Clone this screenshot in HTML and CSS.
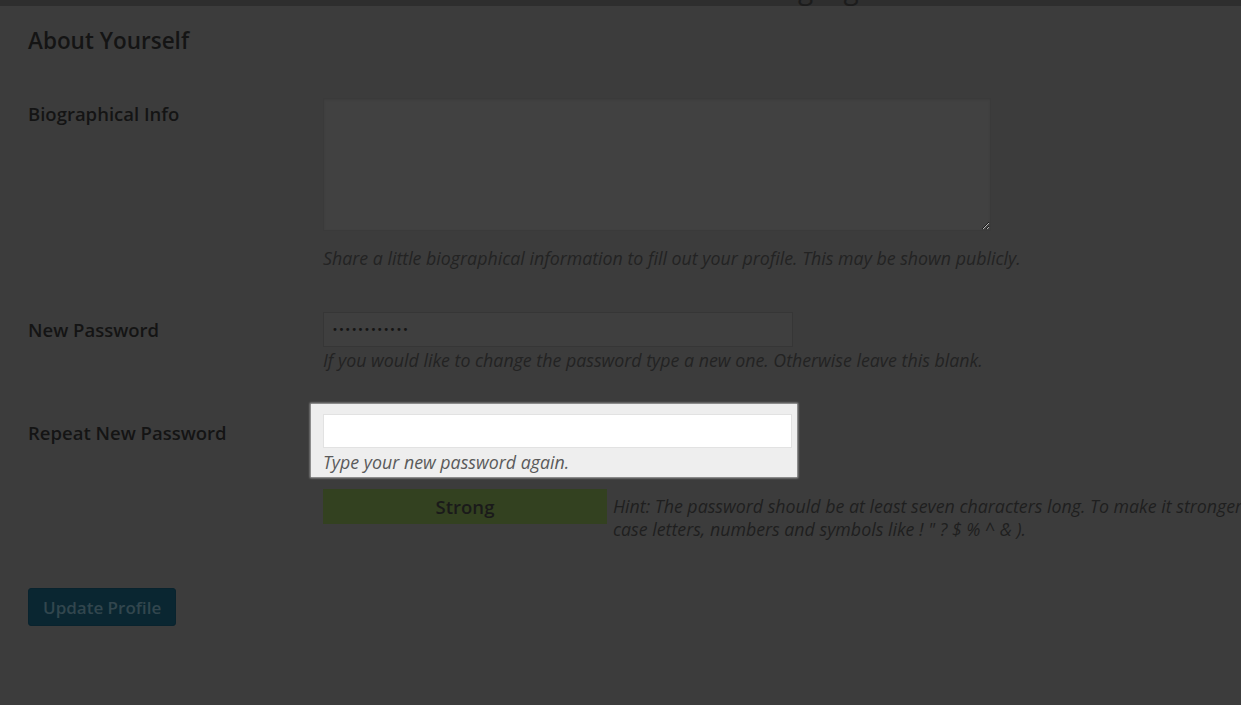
FILE: index.html
```html
<!DOCTYPE html>
<html lang="en">
<head>
    <meta charset="UTF-8">
    <meta name="viewport" content="width=device-width, initial-scale=1.0">
    <title>Profile</title>
    <link rel="stylesheet" href="styles.css">
</head>
<body>

    <!-- cut-off caption strip at the top of the frame -->
    <div class="topbar"><span class="topbar-text">ging</span></div>

    <div class="content">
        <h2>About Yourself</h2>

        <div class="form-row row-bio">
            <label for="description" class="row-label">Biographical Info</label>
            <div class="row-field">
                <textarea id="description" class="bio"></textarea>
                <p class="desc desc-bio">Share a little biographical information to fill out your profile. This may be shown publicly.</p>
            </div>
        </div>

        <div class="form-row row-pass">
            <label for="pass1" class="row-label">New Password</label>
            <div class="row-field">
                <div class="pass-input"><span class="dots">&bull;&bull;&bull;&bull;&bull;&bull;&bull;&bull;&bull;&bull;&bull;&bull;</span></div>
                <p class="desc">If you would like to change the password type a new one. Otherwise leave this blank.</p>
            </div>
        </div>

        <div class="form-row row-repeat">
            <label for="pass2" class="row-label">Repeat New Password</label>
            <div class="row-field">
                <!-- spotlight box -->
                <div class="spotlight">
                    <input type="password" id="pass2" class="repeat-input">
                    <p class="desc desc-light">Type your new password again.</p>
                </div>
                <div class="strength">
                    <div class="strength-bar">Strong</div>
                    <p class="hint">Hint: The password should be at least seven characters long. To make it stronger, use upper and lower case letters, numbers and symbols like ! " ? $ % ^ &amp; ).</p>
                </div>
            </div>
        </div>

        <button class="update">Update Profile</button>
    </div>

</body>
</html>
```

FILE: styles.css
```css
body {
    margin: 0;
    padding: 0;
    background: #3c3c3c;
    font-family: 'Open Sans', 'Noto Sans', sans-serif;
    color: #151515;
    overflow: hidden;
}

.topbar {
    height: 6px;
    background: #2e2e2e;
    overflow: hidden;
    padding-left: 798px;
}

.topbar-text {
    display: block;
    font-size: 28px;
    line-height: 28px;
    margin-top: -26px;
    color: #1c1c1c;
    letter-spacing: 2px;
}

.content {
    padding: 0 0 0 28px;
}

.content h2 {
    font-size: 22.5px;
    font-weight: 600;
    line-height: 28px;
    margin: 21px 0 0 0;
    color: #141414;
}

.form-row {
    display: grid;
    grid-template-columns: 295px 1fr;
}

.row-label {
    font-size: 18.5px;
    font-weight: 600;
    line-height: 24px;
    color: #141414;
}

.row-bio {
    margin-top: 43px;
}

.row-bio .row-label {
    padding-top: 4px;
}

.bio {
    display: block;
    width: 668px;
    height: 133px;
    box-sizing: border-box;
    margin: 0;
    background: #414141;
    border: 1px solid #3a3a3a;
    box-shadow: inset 0 1px 2px rgba(0, 0, 0, 0.08);
    resize: both;
}

.desc {
    margin: 0;
    font-size: 17.8px;
    font-style: italic;
    line-height: 24px;
    color: #232323;
}

.desc-bio {
    margin-top: 15px;
}

.row-pass {
    margin-top: 42px;
}

.row-pass .row-label {
    padding-top: 6px;
}

.pass-input {
    width: 470px;
    height: 35px;
    box-sizing: border-box;
    border: 1px solid #363636;
    background: #3f3f3f;
    padding: 0 0 0 8px;
    display: flex;
    align-items: center;
    margin-bottom: 1px;
}

.dots {
    font-family: 'DejaVu Sans', sans-serif;
    font-size: 10px;
    letter-spacing: 0.5px;
    color: #151515;
}

.row-repeat {
    margin-top: 32px;
}

.row-repeat .row-label {
    padding-top: 17px;
}

.spotlight {
    width: 486px;
    box-sizing: border-box;
    margin-left: -12px;
    padding: 10px 5px 3px 12px;
    background: #eeeeee;
    box-shadow: 0 0 2px 1px rgba(255, 255, 255, 0.6);
}

.repeat-input {
    display: block;
    width: 469px;
    height: 34px;
    box-sizing: border-box;
    margin: 0 0 2px 0;
    border: 1px solid #e2e2e2;
    background: #fff;
    outline: none;
}

.desc-light {
    color: #5a5a5a;
}

.strength {
    display: flex;
    gap: 6px;
    margin-top: 12px;
    width: 1130px;
}

.strength-bar {
    flex: 0 0 284px;
    height: 35px;
    background: #334120;
    font-size: 18.5px;
    font-weight: 600;
    line-height: 35px;
    text-align: center;
    color: #1a1a1a;
}

.hint {
    margin: 6px 0 0 0;
    font-size: 17.8px;
    font-style: italic;
    line-height: 23px;
    color: #1f1f1f;
    width: 830px;
}

.update {
    margin-top: 47px;
    padding: 0 14px;
    height: 38px;
    background: #0a2631;
    border: 1px solid #09232e;
    border-radius: 3px;
    font-family: 'Open Sans', 'Noto Sans', sans-serif;
    font-size: 17px;
    font-weight: 600;
    color: #32464e;
    cursor: pointer;
}
```
